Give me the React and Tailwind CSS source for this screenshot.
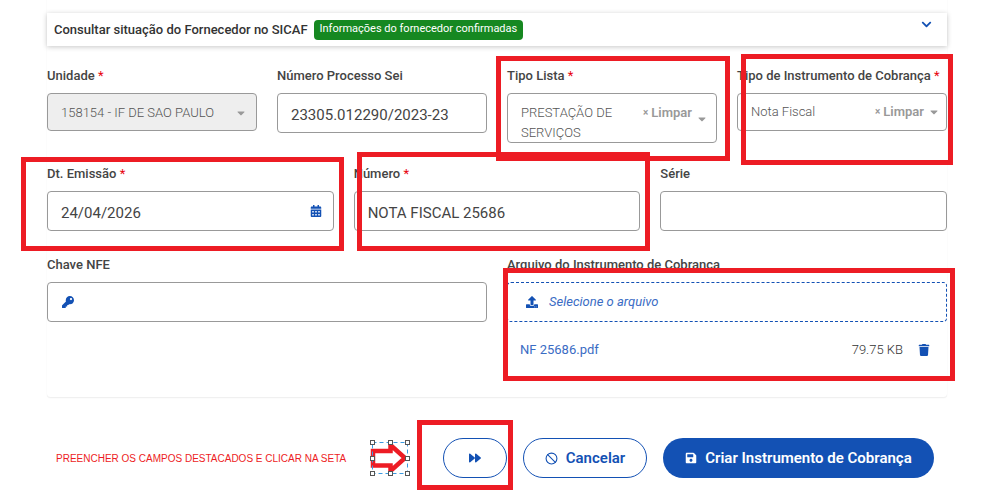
import { Ban } from 'lucide-react';
import { FaCalendarAlt, FaCaretDown, FaChevronDown, FaForward, FaKey, FaSave, FaTrash, FaUpload } from 'react-icons/fa';

const boxClass = 'w-full rounded border border-[#999]';
const inputClass = `${boxClass} h-10 bg-white px-[13px] pt-1 text-[15px] text-[#444]`;

// Red frame drawn over the fields the user has to fill in
const Highlight = ({ className = '' }) => (
    <div className={`absolute z-10 border-[5px] border-[#ed1c24] pointer-events-none ${className}`} />
);

const Field = ({ id, label, required, highlight, children }) => (
    <div className="relative min-w-0">
        <label htmlFor={id} className="mb-[7px] block h-5 whitespace-nowrap text-[13px] leading-5 font-medium text-[#444]">
            {label}
            {required && <span className="font-normal text-red-600"> *</span>}
        </label>
        {children}
        {highlight && <Highlight className={highlight} />}
    </div>
);

const ClearButton = () => (
    <button type="button" className="relative flex items-center gap-[3px] text-[13px] leading-5 font-semibold text-[#999]">
        <span className="text-[10px]">×</span>
        Limpar
    </button>
);

const Caret = () => <FaCaretDown size={12} className="shrink-0 text-[#999] pointer-events-none" />;

const Arrow = () => (
    <svg width="40" height="36" viewBox="0 0 40 36" className="shrink-0">
        <path d="M3 11H20.500V5L35 18L20.500 31V25.500H3Z" fill="#fff" stroke="#ed1c24" strokeWidth="4.500" />
        <rect x="2.500" y="2.500" width="35" height="31" fill="none" stroke="#3b9ae0" strokeDasharray="4 3" />
        {[[2.5, 2.5], [20.5, 2.5], [37.5, 2.5], [2.5, 18.5], [37.5, 18.5], [2.5, 33.5], [20.5, 33.5], [37.5, 33.5]].map(([x, y]) => (
            <rect key={`${x}-${y}`} x={x - 2} y={y - 2} width="4" height="4" fill="#fff" stroke="#555" />
        ))}
    </svg>
);

export default function App() {
    return (
        <div className="min-h-screen bg-white pr-[59px] pl-[47px] font-['Roboto','Liberation_Sans',sans-serif] text-[#333]">
            <main className="rounded-b border-b border-[#f0f0f0] pt-[13px] pb-[37px] shadow-[0_0_1px_#ddd]">
                <header className="flex h-[33px] items-center bg-white px-[7px] shadow-[0_1px_5px_rgba(0,0,0,0.22)]">
                    <h2 className="text-[13px] font-medium">Consultar situação do Fornecedor no SICAF</h2>
                    <span className="ml-[6px] flex h-5 items-center rounded bg-[#168821] px-[6px] text-[11px] text-white">
                        Informações do fornecedor confirmadas
                    </span>
                    <button type="button" aria-label="Expandir" className="mr-2 mb-3 ml-auto h-[10px] text-[#1351b4]">
                        <FaChevronDown size={11} />
                    </button>
                </header>

                <div className="mt-5 grid grid-cols-4 items-start gap-5">
                    <Field id="unidade" label="Unidade" required>
                        <div className={`${boxClass} flex h-[38px] items-center bg-[#eee] px-[9px] pt-[2px]`}>
                            <select id="unidade" disabled className="min-w-0 flex-1 appearance-none px-1 text-[13px] font-light text-[#555] opacity-100">
                                <option>158154 - IF DE SAO PAULO</option>
                            </select>
                            <Caret />
                        </div>
                    </Field>
                    <Field id="processo" label="Número Processo Sei">
                        <input id="processo" className={inputClass} defaultValue="23305.012290/2023-23" />
                    </Field>
                    <Field id="lista" label="Tipo Lista" required highlight="-top-[10px] -bottom-[18px] -left-[11px] -right-[13px]">
                        <div className={`${boxClass} relative flex h-[50px] items-start bg-white pr-2 pl-[13px] pt-[9px]`}>
                            <span aria-hidden="true" className="w-[118px] shrink-0 text-[13px] leading-5 font-light text-[#555]">
                                PRESTAÇÃO DE SERVIÇOS
                            </span>
                            <select id="lista" className="absolute inset-0 h-full w-full opacity-0">
                                <option>PRESTAÇÃO DE SERVIÇOS</option>
                            </select>
                            <div className="ml-auto flex items-start gap-1">
                                <ClearButton />
                                <span className="pt-[10px]"><Caret /></span>
                            </div>
                        </div>
                    </Field>
                    <Field id="tipo" label="Tipo de Instrumento de Cobrança" required highlight="-top-3 -bottom-[34px] left-1 -right-[6px]">
                        <div className={`${boxClass} flex h-[38px] items-center gap-1 bg-white pr-[6px] pl-[9px]`}>
                            <select id="tipo" className="min-w-0 flex-1 appearance-none px-1 text-[13px] font-light text-[#555]">
                                <option>Nota Fiscal</option>
                            </select>
                            <ClearButton />
                            <Caret />
                        </div>
                    </Field>
                </div>

                <div className="mt-[21px] grid grid-cols-3 gap-5">
                    <Field id="emissao" label="Dt. Emissão" required highlight="-top-[7px] -bottom-5 -left-[26px] -right-[10px]">
                        <div className={`${boxClass} flex h-10 items-center bg-white pr-[11px]`}>
                            <input id="emissao" className="min-w-0 flex-1 px-[13px] pt-1 text-[15px] text-[#444]" defaultValue="24/04/2026" />
                            <button type="button" aria-label="Abrir calendário" className="text-[#1351b4]">
                                <FaCalendarAlt size={12} />
                            </button>
                        </div>
                    </Field>
                    <Field id="numero" label="Número" required highlight="-top-3 -bottom-5 left-[3px] -right-[10px]">
                        <input id="numero" className={inputClass} defaultValue="NOTA FISCAL 25686" />
                    </Field>
                    <Field id="serie" label="Série">
                        <input id="serie" className={inputClass} />
                    </Field>
                </div>

                <div className="mt-6 grid grid-cols-2 gap-5">
                    <Field id="chave" label="Chave NFE">
                        <div className={`${boxClass} flex h-10 items-center bg-white pl-[14px]`}>
                            <FaKey size={12} className="text-[#1351b4]" />
                            <input id="chave" className="min-w-0 flex-1 px-2 text-[15px]" />
                        </div>
                    </Field>
                    <Field id="arquivo" label="Arquivo do Instrumento de Cobrança" highlight="top-[13px] -bottom-[21px] -left-1 -right-2">
                        <button id="arquivo" type="button" className="flex h-10 w-full items-center gap-[11px] rounded border border-dashed border-[#1351b4] px-[18px] text-[13px] text-[#1351b4] italic">
                            <FaUpload size={12} />
                            <span className="text-[#3a6cc4]">Selecione o arquivo</span>
                        </button>
                        <div className="mt-[18px] flex h-5 items-center px-[13px] text-[13px]">
                            <a href="#arquivo" className="text-[#3a6cc4]">NF 25686.pdf</a>
                            <span className="ml-auto font-light">79.75 KB</span>
                            <button type="button" aria-label="Remover arquivo" className="ml-[15px] mr-1 text-[#1351b4]">
                                <FaTrash size={12} />
                            </button>
                        </div>
                    </Field>
                </div>
            </main>

            <footer className="mt-10 flex items-center justify-between pr-[13px] pl-[9px] pb-3">
                <div className="flex items-center gap-6">
                    <p className="whitespace-nowrap font-['Liberation_Sans',sans-serif] text-[10px] text-[#ed1c24]">
                        PREENCHER OS CAMPOS DESTACADOS E CLICAR NA SETA
                    </p>
                    <Arrow />
                </div>
                <div className="flex items-center gap-4 text-[15px] font-semibold">
                    <div className="relative">
                        <button type="button" aria-label="Avançar" className="flex h-10 w-16 items-center justify-center rounded-full border border-[#1351b4] text-[#1351b4]">
                            <FaForward size={12} />
                        </button>
                        <Highlight className="-top-[18px] -bottom-3 -left-[26px] -right-[6px]" />
                    </div>
                    <button type="button" className="flex h-10 w-[124px] items-center justify-center gap-2 rounded-full border border-[#1351b4] text-[#1351b4]">
                        <Ban size={13} strokeWidth={2} />
                        Cancelar
                    </button>
                    <button type="button" className="flex h-10 w-[271px] items-center justify-center gap-2 rounded-full bg-[#1351b4] text-white">
                        <FaSave size={12} />
                        Criar Instrumento de Cobrança
                    </button>
                </div>
            </footer>
        </div>
    );
}
